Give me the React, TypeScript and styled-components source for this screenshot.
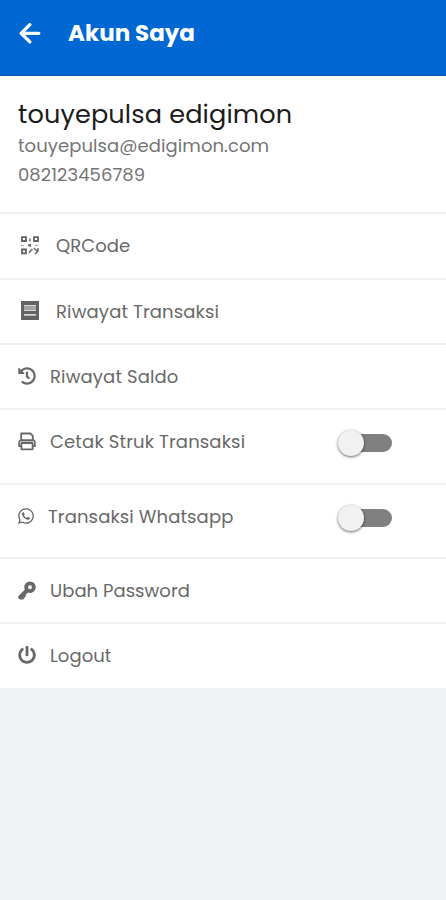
import React from "react";
import styled, { createGlobalStyle } from "styled-components";
import { FaHistory, FaPowerOff, FaWhatsapp } from "react-icons/fa";

const GlobalStyle = createGlobalStyle`
  * { box-sizing: border-box; }
  body {
    margin: 0;
    background: #eff1f5;
    font-family: Poppins, Inter, "Open Sans", sans-serif;
    font-feature-settings: "cv11";
  }
`;

const Page = styled.div`
  min-height: 900px;
  background: #eff1f5;
`;

const Header = styled.header`
  height: 76px;
  padding: 0 18px 9px;
  display: flex;
  align-items: center;
  gap: 27px;
  background: #0168d3;
  border-bottom: 1px solid #0759b4;
  color: #fff;
`;

const Title = styled.h1`
  margin: 0;
  font-size: 23px;
  line-height: 30px;
  font-weight: 700;
  white-space: nowrap;
`;

const Card = styled.main`
  background: #fff;
`;

const Profile = styled.section`
  height: 138px;
  padding: 22px 18px 0;
  border-bottom: 2px solid #efefef;
`;

const Name = styled.h2`
  margin: 0 0 1px;
  font-size: 25.6px;
  line-height: 32px;
  font-weight: 400;
  letter-spacing: 0.12px;
  color: #1c1c1c;
  white-space: nowrap;
`;

const Detail = styled.p`
  margin: 0;
  font-size: 18px;
  line-height: 29px;
  letter-spacing: 0.07px;
  color: #757575;
`;

const Row = styled.div<{ $h: number; $gap: number; $left: number }>`
  height: ${(p) => p.$h}px;
  padding: 0 54px 0 ${(p) => p.$left}px;
  display: flex;
  align-items: flex-start;
  gap: ${(p) => p.$gap}px;
  color: #686868;
  border-bottom: 2px solid #f1f1f1;
  &:last-child { border-bottom: 0; }
`;

const IconBox = styled.span`
  height: 62px;
  display: flex;
  align-items: center;
`;

const Label = styled.span<{ $track: number }>`
  flex: 1;
  line-height: 64px;
  font-size: 18px;
  letter-spacing: ${(p) => p.$track}px;
  white-space: nowrap;
`;

const Switch = styled.span<{ $h: number }>`
  width: 54px;
  height: ${(p) => p.$h - 9}px;
  display: flex;
  align-items: center;
`;

const Knob = styled.span`
  flex: none;
  width: 26px;
  height: 26px;
  border-radius: 50%;
  background: #f1f1f1;
  box-shadow: 0 1px 3px rgba(0, 0, 0, 0.6);
  z-index: 1;
`;

const Track = styled.span`
  flex: 1;
  height: 18px;
  margin-left: -12px;
  border-radius: 9px;
  background: #808080;
`;

const BackArrow = () => (
  <svg width="23" height="22" viewBox="0 0 23 22" fill="none" stroke="#fff" strokeWidth="3.3" strokeLinecap="round" strokeLinejoin="round">
    <path d="M11.8 2.7 3.2 11.3l8.6 8.6M3.7 11.3H20.8" />
  </svg>
);

const QrIcon = () => (
  <svg width="20" height="19" viewBox="0 0 20 19" fill="none" stroke="#626262" strokeWidth="1.8">
    <path d="M2 1.2h4v3.8h-4zM14 1.2h4v3.8h-4zM2 13.5h4v3.8h-4z" />
    <path d="M10 2.5v3M8 9h3M10 8v3M12.5 13l-3 3v1M14 12l3 3M18 12v3l-3 3" strokeWidth="1.4" />
    <path d="M1 9.5h3M15 9.5h3" strokeWidth="1.3" stroke="#b5b5b5" />
  </svg>
);

const ReceiptIcon = () => (
  <svg width="18" height="20" viewBox="0 0 18 20">
    <path fill="#636363" d="M0 0h18v19H0z" />
    <path fill="#d8d8d8" d="M3 4h12v1.5H3zM3 8.6h12v1.4H3zM3 13h12v1.7H3z" />
    <path fill="#a5a5a5" d="M3 5.5h12v3.1H3z" />
  </svg>
);

const PrinterIcon = () => (
  <svg width="18" height="19" viewBox="0 0 18 19" fill="none" stroke="#686868" strokeWidth="1.8" strokeLinejoin="round">
    <path d="M3.2 8V1.5h9.3l2.3 2.3V8" />
    <path d="M3.5 14.2H1.2v-4a2 2 0 0 1 2-2h11.6a2 2 0 0 1 2 2v4h-2.3" />
    <path d="M3.4 11v6.3h11.2V11" />
    <path d="M3 10.8h12" strokeWidth="2.5" />
  </svg>
);

const KeyIcon = () => (
  <svg width="18" height="19" viewBox="0 0 18 19" fill="none" stroke="#686868" strokeLinecap="round" strokeLinejoin="round">
    <circle cx="12" cy="6.2" r="3.9" strokeWidth="3.8" />
    <path d="M8.7 9.8 2.3 16.2" strokeWidth="4.2" />
    <path d="M3 17.6h2l2.2-3" strokeWidth="1.6" />
  </svg>
);

type Item = {
  label: string;
  icon: React.ReactNode;
  h: number;
  gap: number;
  left: number;
  track: number;
  toggle?: boolean;
};

const items: Item[] = [
  { label: "QRCode", icon: <QrIcon />, h: 66, gap: 16, left: 20, track: 0.05 },
  { label: "Riwayat Transaksi", icon: <ReceiptIcon />, h: 65, gap: 17, left: 21, track: 0.14 },
  { label: "Riwayat Saldo", icon: <FaHistory size={18} />, h: 65, gap: 14, left: 18, track: 0.13 },
  { label: "Cetak Struk Transaksi", icon: <PrinterIcon />, h: 75, gap: 14, left: 18, track: 0.15, toggle: true },
  { label: "Transaksi Whatsapp", icon: <FaWhatsapp size={18} />, h: 74, gap: 13, left: 17, track: 0.12, toggle: true },
  { label: "Ubah Password", icon: <KeyIcon />, h: 65, gap: 14, left: 18, track: 0.04 },
  { label: "Logout", icon: <FaPowerOff size={18} />, h: 64, gap: 14, left: 18, track: 0.06 },
];

export default function App() {
  return (
    <Page>
      <GlobalStyle />
      <Header>
        <BackArrow />
        <Title>Akun Saya</Title>
      </Header>
      <Card>
        <Profile>
          <Name>touyepulsa edigimon</Name>
          <Detail>touyepulsa@edigimon.com</Detail>
          <Detail>082123456789</Detail>
        </Profile>
        {items.map((it) => (
          <Row key={it.label} $h={it.h} $gap={it.gap} $left={it.left}>
            <IconBox>{it.icon}</IconBox>
            <Label $track={it.track}>{it.label}</Label>
            {it.toggle && (
              <Switch $h={it.h} role="switch" aria-checked={false}>
                <Knob />
                <Track />
              </Switch>
            )}
          </Row>
        ))}
      </Card>
    </Page>
  );
}
